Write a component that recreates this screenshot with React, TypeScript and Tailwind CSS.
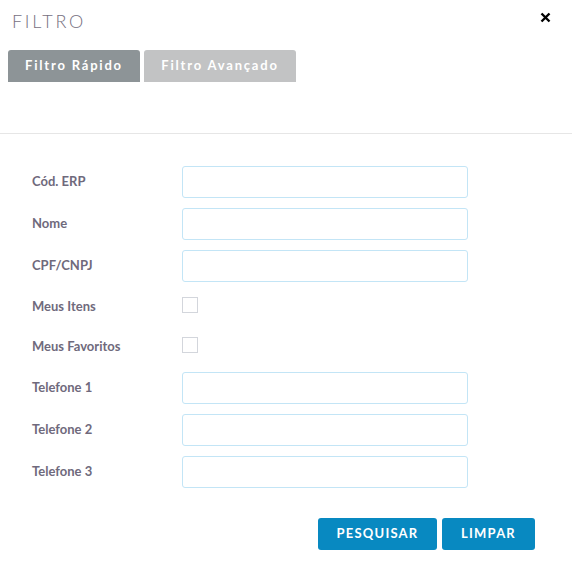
import React from 'react';

const textFields = ['Cód. ERP', 'Nome', 'CPF/CNPJ'];
const phoneFields = ['Telefone 1', 'Telefone 2', 'Telefone 3'];
const checkFields = ['Meus Itens', 'Meus Favoritos'];

const InputRow: React.FC<{ label: string }> = ({ label }) => (
    <div className="flex items-center h-8">
        <label className="w-[182px] pl-8 text-[13px] font-bold text-[#6f6a7c]">{label}</label>
        <input className="w-[286px] h-8 border border-[#c3e5f6] rounded-[3px] px-2 text-[12px] outline-none" />
    </div>
);

const CheckRow: React.FC<{ label: string }> = ({ label }) => (
    <div className="flex items-center h-[30px]">
        <label className="w-[182px] pl-8 text-[13px] font-bold text-[#6f6a7c]">{label}</label>
        <span className="w-4 h-4 mb-[4px] border border-[#d3d6dc] bg-white" />
    </div>
);

export default function App() {
    return (
        <div className="w-[572px] h-[588px] bg-white font-['Lato',sans-serif]">
            {/* header */}
            <div className="flex items-start justify-between h-[50px] pl-3 pr-[21px] pt-[10px]">
                <h1 className="text-[18px] font-light tracking-[2.7px] leading-[22px] text-[#77707f]">FILTRO</h1>
                <button className="mt-[2px]">
                    <svg width="11" height="11" viewBox="0 0 11 11">
                        <path d="M1.5 1.5 L9.5 9.5 M9.5 1.5 L1.5 9.5" stroke="#000" strokeWidth="2.4" />
                    </svg>
                </button>
            </div>

            {/* tabs */}
            <div className="flex gap-1 px-2 h-8">
                <button className="w-[132px] h-8 rounded-t-[3px] bg-[#8d9497] text-white text-[13px] font-bold tracking-[1.8px]">
                    Filtro Rápido
                </button>
                <button className="w-[152px] h-8 rounded-t-[3px] bg-[#c2c3c4] text-white text-[13px] font-bold tracking-[1.8px]">
                    Filtro Avançado
                </button>
            </div>

            <div className="h-[52px] border-b border-[#e6e6e6]" />

            {/* form */}
            <div className="flex flex-col gap-[10px] pt-[32px]">
                {textFields.map(f => <InputRow key={f} label={f} />)}
                {checkFields.map(f => <CheckRow key={f} label={f} />)}
                {phoneFields.map(f => <InputRow key={f} label={f} />)}
            </div>

            <div className="flex justify-end gap-[5px] pr-[37px] pt-[30px]">
                <button className="w-[119px] h-8 rounded-[3px] bg-[#0889c1] text-white text-[13px] font-bold tracking-[1.2px]">
                    PESQUISAR
                </button>
                <button className="w-[93px] h-8 rounded-[3px] bg-[#0889c1] text-white text-[13px] font-bold tracking-[1.2px]">
                    LIMPAR
                </button>
            </div>
        </div>
    );
}
